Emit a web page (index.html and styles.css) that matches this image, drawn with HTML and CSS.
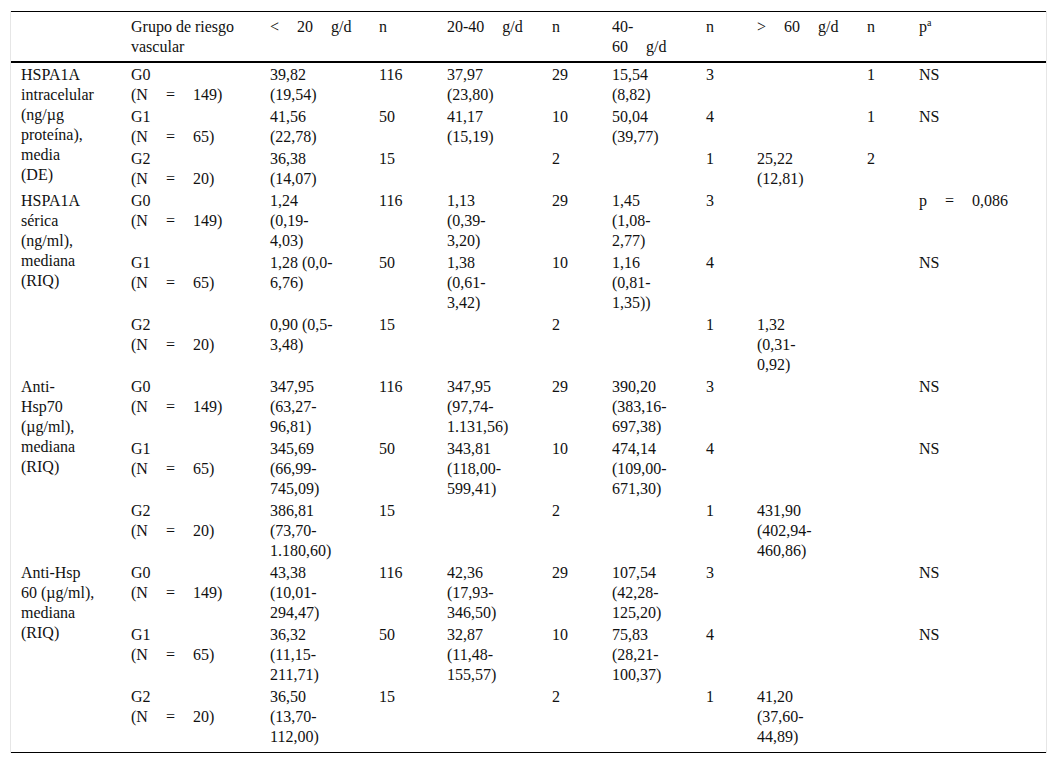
FILE: index.html
```html
<!DOCTYPE html>
<html lang="es">
<head>
<meta charset="utf-8">
<title>Tabla</title>
<link rel="stylesheet" href="styles.css">
</head>
<body>
<div class="frame">
<table class="data">
<colgroup>
<col class="c1"><col class="c2"><col class="c3"><col class="c4"><col class="c5"><col class="c6"><col class="c7"><col class="c8"><col class="c9"><col class="c10"><col class="c11">
</colgroup>
<thead>
<tr>
<th></th>
<th>Grupo de riesgo<br>vascular</th>
<th><span class="ws">&lt; 20 g/d</span></th>
<th>n</th>
<th><span class="ws">20-40 g/d</span></th>
<th>n</th>
<th>40-<br><span class="ws">60 g/d</span></th>
<th>n</th>
<th><span class="ws">&gt; 60 g/d</span></th>
<th>n</th>
<th>p<sup>a</sup></th>
</tr>
</thead>
<tbody>
<tr>
<td rowspan="3">HSPA1A<br>intracelular<br>(ng/µg<br>proteína),<br>media<br>(DE)</td>
<td>G0<br><span class="ws">(N = 149)</span></td>
<td>39,82<br>(19,54)</td><td>116</td><td>37,97<br>(23,80)</td><td>29</td><td>15,54<br>(8,82)</td><td>3</td><td></td><td>1</td><td>NS</td>
</tr>
<tr>
<td>G1<br><span class="ws">(N = 65)</span></td>
<td>41,56<br>(22,78)</td><td>50</td><td>41,17<br>(15,19)</td><td>10</td><td>50,04<br>(39,77)</td><td>4</td><td></td><td>1</td><td>NS</td>
</tr>
<tr>
<td>G2<br><span class="ws">(N = 20)</span></td>
<td>36,38<br>(14,07)</td><td>15</td><td></td><td>2</td><td></td><td>1</td><td>25,22<br>(12,81)</td><td>2</td><td></td>
</tr>
<tr>
<td rowspan="3">HSPA1A<br>sérica<br>(ng/ml),<br>mediana<br>(RIQ)</td>
<td>G0<br><span class="ws">(N = 149)</span></td>
<td>1,24<br>(0,19-<br>4,03)</td><td>116</td><td>1,13<br>(0,39-<br>3,20)</td><td>29</td><td>1,45<br>(1,08-<br>2,77)</td><td>3</td><td></td><td></td><td><span class="ws">p = 0,086</span></td>
</tr>
<tr>
<td>G1<br><span class="ws">(N = 65)</span></td>
<td>1,28 (0,0-<br>6,76)</td><td>50</td><td>1,38<br>(0,61-<br>3,42)</td><td>10</td><td>1,16<br>(0,81-<br>1,35))</td><td>4</td><td></td><td></td><td>NS</td>
</tr>
<tr>
<td>G2<br><span class="ws">(N = 20)</span></td>
<td>0,90 (0,5-<br>3,48)</td><td>15</td><td></td><td>2</td><td></td><td>1</td><td>1,32<br>(0,31-<br>0,92)</td><td></td><td></td>
</tr>
<tr>
<td rowspan="3">Anti-<br>Hsp70<br>(µg/ml),<br>mediana<br>(RIQ)</td>
<td>G0<br><span class="ws">(N = 149)</span></td>
<td>347,95<br>(63,27-<br>96,81)</td><td>116</td><td>347,95<br>(97,74-<br>1.131,56)</td><td>29</td><td>390,20<br>(383,16-<br>697,38)</td><td>3</td><td></td><td></td><td>NS</td>
</tr>
<tr>
<td>G1<br><span class="ws">(N = 65)</span></td>
<td>345,69<br>(66,99-<br>745,09)</td><td>50</td><td>343,81<br>(118,00-<br>599,41)</td><td>10</td><td>474,14<br>(109,00-<br>671,30)</td><td>4</td><td></td><td></td><td>NS</td>
</tr>
<tr>
<td>G2<br><span class="ws">(N = 20)</span></td>
<td>386,81<br>(73,70-<br>1.180,60)</td><td>15</td><td></td><td>2</td><td></td><td>1</td><td>431,90<br>(402,94-<br>460,86)</td><td></td><td></td>
</tr>
<tr>
<td rowspan="3">Anti-Hsp<br>60 (µg/ml),<br>mediana<br>(RIQ)</td>
<td>G0<br><span class="ws">(N = 149)</span></td>
<td>43,38<br>(10,01-<br>294,47)</td><td>116</td><td>42,36<br>(17,93-<br>346,50)</td><td>29</td><td>107,54<br>(42,28-<br>125,20)</td><td>3</td><td></td><td></td><td>NS</td>
</tr>
<tr>
<td>G1<br><span class="ws">(N = 65)</span></td>
<td>36,32<br>(11,15-<br>211,71)</td><td>50</td><td>32,87<br>(11,48-<br>155,57)</td><td>10</td><td>75,83<br>(28,21-<br>100,37)</td><td>4</td><td></td><td></td><td>NS</td>
</tr>
<tr class="last">
<td>G2<br><span class="ws">(N = 20)</span></td>
<td>36,50<br>(13,70-<br>112,00)</td><td>15</td><td></td><td>2</td><td></td><td>1</td><td>41,20<br>(37,60-<br>44,89)</td><td></td><td></td>
</tr>
</tbody>
</table>
</div>
</body>
</html>
```

FILE: styles.css
```css
html, body {
  margin: 0;
  padding: 0;
  background: #ffffff;
}

body {
  font-family: "Liberation Serif", "Times New Roman", serif;
  font-size: 16px;
  line-height: 20px;
  color: #111111;
}

.frame {
  margin: 11px 10px 0 10px;
  width: 1035px;
  border-left: 1px solid #e6e6e6;
  border-right: 1px solid #e6e6e6;
}

.data {
  width: 1035px;
  table-layout: fixed;
  border-collapse: collapse;
  border-spacing: 0;
  border-top: 1px solid #000000;
  border-bottom: 1px solid #000000;
}

.c1 { width: 110px; }
.c2 { width: 139px; }
.c3 { width: 109px; }
.c4 { width: 68px; }
.c5 { width: 105px; }
.c6 { width: 60px; }
.c7 { width: 94px; }
.c8 { width: 51px; }
.c9 { width: 110px; }
.c10 { width: 52px; }
.c11 { width: 137px; }

.data th,
.data td {
  padding: 2px 0 0 10px;
  text-align: left;
  vertical-align: top;
  font-weight: normal;
  white-space: nowrap;
}

.data thead th {
  padding-top: 5px;
  padding-bottom: 4px;
  border-bottom: 2px solid #000000;
}

.data tr.last td {
  padding-bottom: 5px;
}

.ws {
  word-spacing: 14px;
}

sup {
  font-size: 10px;
  line-height: 0;
  vertical-align: 6px;
}
```
